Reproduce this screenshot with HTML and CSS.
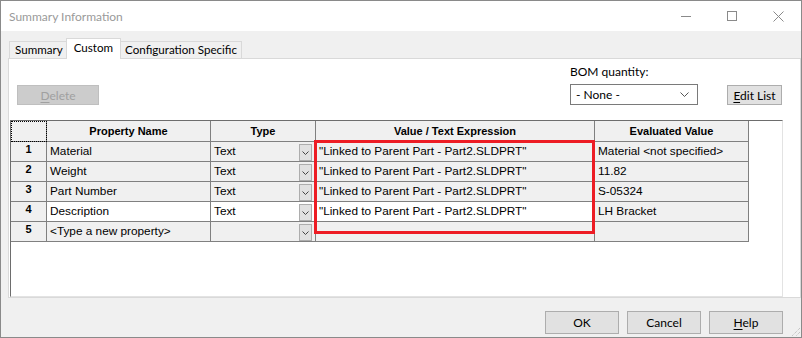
FILE: index.html
```html
<!DOCTYPE html>
<html lang="en">

<head>
    <meta charset="UTF-8" />
    <title>Summary Information</title>
    <link rel="stylesheet" href="styles.css">
</head>

<body>
    <div class="window">
        <div class="titlebar">
            <span class="title">Summary Information</span>
            <div class="controls">
                <span class="ctl">
                    <svg width="10" height="10" viewBox="0 0 10 10"><path d="M0 5.5H10" stroke="#8a8a8a" /></svg>
                </span>
                <span class="ctl">
                    <svg width="10" height="10" viewBox="0 0 10 10"><rect x="0.5" y="0.5" width="9" height="9" fill="none" stroke="#8a8a8a" /></svg>
                </span>
                <span class="ctl">
                    <svg width="11" height="11" viewBox="0 0 11 11"><path d="M0.5 0.5L10.5 10.5M10.5 0.5L0.5 10.5" stroke="#8a8a8a" /></svg>
                </span>
            </div>
        </div>

        <div class="body">
            <div class="tabs">
                <div class="tab tab-first">Summary</div>
                <div class="tab active">Custom</div>
                <div class="tab">Configuration Specific</div>
            </div>

            <div class="panel">
                <div class="toolbar">
                    <button class="btn btn-delete" disabled><u>D</u>elete</button>
                    <div class="bom">
                        <div class="bom-label">BOM quantity:</div>
                        <div class="bom-row">
                            <div class="select">
                                <span>- None -</span>
                                <svg width="9" height="5" viewBox="0 0 9 5"><path d="M0.5 0.5L4.5 4.5L8.5 0.5" fill="none" stroke="#555" /></svg>
                            </div>
                            <button class="btn btn-edit"><u>E</u>dit List</button>
                        </div>
                    </div>
                </div>

                <div class="grid">
                    <table>
                        <colgroup>
                            <col style="width: 36px">
                            <col style="width: 164px">
                            <col style="width: 105px">
                            <col style="width: 279px">
                            <col style="width: 154px">
                        </colgroup>
                        <thead>
                            <tr>
                                <th class="corner"></th>
                                <th>Property Name</th>
                                <th>Type</th>
                                <th>Value / Text Expression</th>
                                <th>Evaluated Value</th>
                            </tr>
                        </thead>
                        <tbody id="rows"></tbody>
                    </table>
                    <div class="highlight"></div>
                </div>
            </div>

            <div class="footer">
                <button class="btn btn-foot">OK</button>
                <button class="btn btn-foot">Cancel</button>
                <button class="btn btn-foot"><u>H</u>elp</button>
            </div>
        </div>

        <svg class="grip" width="12" height="12" viewBox="0 0 12 12">
            <path d="M11 3L3 11M11 7L7 11M11 11L11 11" stroke="#b4b4b4" stroke-dasharray="1 1" />
        </svg>
    </div>

    <script>
        const props = [
            { name: 'Material', type: 'Text', value: '"Linked to Parent Part - Part2.SLDPRT"', evaluated: 'Material <not specified>' },
            { name: 'Weight', type: 'Text', value: '"Linked to Parent Part - Part2.SLDPRT"', evaluated: '11.82' },
            { name: 'Part Number', type: 'Text', value: '"Linked to Parent Part - Part2.SLDPRT"', evaluated: 'S-05324' },
            { name: 'Description', type: 'Text', value: '"Linked to Parent Part - Part2.SLDPRT"', evaluated: 'LH Bracket', current: true },
            { name: '<Type a new property>', type: '', value: '', evaluated: '' }
        ];

        const esc = s => s.replace(/</g, '&lt;').replace(/>/g, '&gt;');
        const chevron = '<svg width="7" height="4" viewBox="0 0 7 4"><path d="M0.5 0.5L3.5 3.5L6.5 0.5" fill="none" stroke="#444" /></svg>';

        document.getElementById('rows').innerHTML = props.map((p, i) => `
        <tr class="${p.current ? 'current' : ''}">
          <td class="num">${i + 1}</td>
          <td class="cell">${esc(p.name)}</td>
          <td class="cell type">
            <div class="combo"><span>${p.type}</span><span class="drop">${chevron}</span></div>
          </td>
          <td class="cell">${esc(p.value)}</td>
          <td class="cell eval">${esc(p.evaluated)}</td>
        </tr>
      `).join('');
    </script>
</body>

</html>
```

FILE: styles.css
```css
* {
    box-sizing: border-box;
}

body {
    margin: 0;
    font-family: Lato, "Noto Sans", sans-serif;
    font-size: 12px;
    color: #000;
}

.window {
    position: relative;
    width: 802px;
    height: 338px;
    border: 1px solid #8a8a8a;
    background: #f0f0f0;
    display: flex;
    flex-direction: column;
}

.titlebar {
    height: 30px;
    flex: none;
    background: #fff;
    display: flex;
    align-items: center;
}

.title {
    padding-left: 8px;
    color: #9a9a9a;
}

.controls {
    margin-left: auto;
    display: flex;
}

.ctl {
    width: 46px;
    height: 30px;
    display: flex;
    align-items: center;
    justify-content: center;
}

.body {
    flex: 1;
    display: flex;
    flex-direction: column;
}

.tabs {
    height: 20px;
    margin-top: 7px;
    padding-left: 8px;
    display: flex;
    align-items: flex-end;
    font-size: 11.6px;
}

.tab {
    height: 17px;
    padding: 0 4px 0 5px;
    border: 1px solid #d9d9d9;
    border-bottom: none;
    border-left: none;
    background: #f0f0f0;
    line-height: 16px;
    white-space: nowrap;
}

.tab-first {
    border-left: 1px solid #d9d9d9;
    padding: 0 3px 0 5px;
}

.tab.active {
    position: relative;
    z-index: 1;
    height: 21px;
    margin: 0 -1px -1px -1px;
    padding: 0 7px;
    border-left: 1px solid #d9d9d9;
    background: #fff;
    line-height: 17px;
}

.panel {
    height: 240px;
    flex: none;
    margin-left: 7px;
    background: #fff;
    border: 1px solid #d9d9d9;
    display: flex;
    flex-direction: column;
}

.toolbar {
    height: 61px;
    flex: none;
    display: flex;
    padding: 0 18px 0 8px;
}

.btn {
    height: 20px;
    padding: 0;
    font-family: inherit;
    font-size: 12px;
    color: #000;
    background: #e1e1e1;
    border: 1px solid #adadad;
}

.btn u {
    text-underline-offset: 2px;
}

.btn-delete {
    width: 82px;
    margin-top: 26px;
    background: #cccccc;
    border-color: #bfbfbf;
    color: #a0a0a0;
}

.bom {
    margin-left: auto;
    width: 212px;
}

.bom-label {
    margin-top: 5px;
    height: 16px;
    line-height: 16px;
}

.bom-row {
    margin-top: 4px;
    display: flex;
    align-items: flex-start;
    justify-content: space-between;
}

.select {
    width: 128px;
    height: 21px;
    border: 1px solid #7a7a7a;
    background: #fff;
    padding: 0 8px 0 5px;
    display: flex;
    align-items: center;
    justify-content: space-between;
}

.btn-edit {
    width: 55px;
    margin-top: 1px;
}

.grid {
    position: relative;
    flex: 1;
    width: 773px;
    margin-left: 1px;
    background: #fff;
    border: 1px solid;
    border-color: #6d6d6d #e3e3e3 #e3e3e3 #6d6d6d;
}

table {
    table-layout: fixed;
    width: 738px;
    border-spacing: 0;
    font-family: "Liberation Sans", Arial, sans-serif;
    font-size: 11.8px;
}

th,
td {
    height: 20px;
    padding: 0 3px;
    border-right: 1px solid #808080;
    border-bottom: 1px solid #808080;
    white-space: nowrap;
    overflow: hidden;
    background: #f0f0f0;
}

th {
    height: 21px;
    font-size: 11px;
    font-weight: bold;
    text-align: center;
}

th.corner {
    outline: 1px dotted #000;
    outline-offset: -1px;
}

.cell {
    text-align: left;
    padding-top: 1px;
    vertical-align: top;
    line-height: 17px;
}

.num {
    font-size: 11px;
    font-weight: bold;
    text-align: center;
    vertical-align: top;
    line-height: 15px;
}

tr.current .cell {
    background: #fff;
}

tr.current .eval {
    background: #f0f0f0;
}

.combo {
    display: flex;
    justify-content: space-between;
}

.drop {
    width: 13px;
    height: 17px;
    margin-top: 1px;
    background: #e1e1e1;
    border: 1px solid #adadad;
    display: flex;
    align-items: center;
    justify-content: center;
}

.highlight {
    position: absolute;
    left: 303px;
    top: 19px;
    width: 281px;
    height: 94px;
    border: 3px solid #ed1c24;
}

.footer {
    flex: 1;
    display: flex;
    justify-content: flex-end;
    gap: 8px;
    padding: 13px 18px 0 0;
}

.btn-foot {
    width: 74px;
    height: 23px;
}

.grip {
    position: absolute;
    right: 0;
    bottom: 0;
}
```
